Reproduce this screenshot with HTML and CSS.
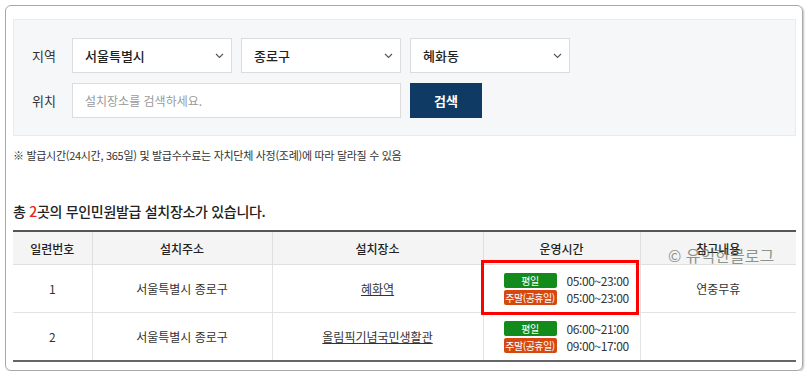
FILE: index.html
```html
<!DOCTYPE html>
<html lang="ko">
<head>
    <meta charset="UTF-8">
    <title>무인민원발급기 설치장소</title>
    <link rel="stylesheet" href="styles.css">
</head>
<body>

<div class="card">
    <div class="search-box">
        <div class="search-row">
            <span class="search-label">지역</span>
            <div class="select">
                <span>서울특별시</span>
                <svg width="9" height="6" viewBox="0 0 9 6"><path d="M1 1l3.5 3.5L8 1" fill="none" stroke="#555" stroke-width="1.1"/></svg>
            </div>
            <div class="select">
                <span>종로구</span>
                <svg width="9" height="6" viewBox="0 0 9 6"><path d="M1 1l3.5 3.5L8 1" fill="none" stroke="#555" stroke-width="1.1"/></svg>
            </div>
            <div class="select">
                <span>혜화동</span>
                <svg width="9" height="6" viewBox="0 0 9 6"><path d="M1 1l3.5 3.5L8 1" fill="none" stroke="#555" stroke-width="1.1"/></svg>
            </div>
        </div>
        <div class="search-row">
            <span class="search-label">위치</span>
            <input type="text" class="search-input" placeholder="설치장소를 검색하세요.">
            <button type="button" class="search-btn">검색</button>
        </div>
    </div>

    <p class="note">※ 발급시간(24시간, 365일) 및 발급수수료는 자치단체 사정(조례)에 따라 달라질 수 있음</p>

    <h2 class="result-title">총 <em>2</em>곳의 무인민원발급 설치장소가 있습니다.</h2>

    <table class="result-table">
        <colgroup>
            <col class="col-no">
            <col class="col-addr">
            <col class="col-place">
            <col class="col-time">
            <col class="col-memo">
        </colgroup>
        <thead>
            <tr>
                <th>일련번호</th>
                <th>설치주소</th>
                <th>설치장소</th>
                <th>운영시간</th>
                <th>참고내용</th>
            </tr>
        </thead>
        <tbody>
            <tr>
                <td>1</td>
                <td>서울특별시 종로구</td>
                <td><a href="#">혜화역</a></td>
                <td>
                    <div class="hours"><span class="badge weekday">평일</span><span>05:00~23:00</span></div>
                    <div class="hours"><span class="badge weekend">주말(공휴일)</span><span>05:00~23:00</span></div>
                </td>
                <td>연중무휴</td>
            </tr>
            <tr>
                <td>2</td>
                <td>서울특별시 종로구</td>
                <td><a href="#">올림픽기념국민생활관</a></td>
                <td>
                    <div class="hours"><span class="badge weekday">평일</span><span>06:00~21:00</span></div>
                    <div class="hours"><span class="badge weekend">주말(공휴일)</span><span>09:00~17:00</span></div>
                </td>
                <td></td>
            </tr>
        </tbody>
    </table>

    <div class="highlight"></div>
    <div class="watermark">© 유익한블로그</div>
</div>

</body>
</html>
```

FILE: styles.css
```css
body {
    margin: 5px 0 0 5px;
    font-family: "Noto Sans CJK KR", "Noto Sans", sans-serif;
    color: #333;
    background: #fff;
}

.card {
    position: relative;
    box-sizing: border-box;
    width: 798px;
    height: 366px;
    padding: 13px 6px 0 7px;
    border: 1px solid #a8a8a8;
    border-radius: 6px;
    box-shadow: 1px 1px 2px rgba(0,0,0,0.25);
}

.search-box {
    box-sizing: border-box;
    height: 117px;
    padding: 18px 18px;
    background: #f6f7f9;
    border: 1px solid #e9eaec;
    display: flex;
    flex-direction: column;
    gap: 10px;
}

.search-row {
    display: flex;
    align-items: center;
    gap: 9px;
    height: 35px;
}

.search-label {
    width: 31px;
    font-size: 13px;
    color: #333;
}

.select {
    box-sizing: border-box;
    width: 160px;
    height: 35px;
    padding: 0 7px 0 12px;
    background: #fff;
    border: 1px solid #dcdcdc;
    display: flex;
    align-items: center;
    justify-content: space-between;
    font-size: 13px;
    font-weight: 500;
    color: #222;
}

.search-input {
    box-sizing: border-box;
    width: 329px;
    height: 35px;
    padding: 0 12px;
    border: 1px solid #dcdcdc;
    font-family: inherit;
    font-size: 12px;
    outline: none;
}

.search-input::placeholder {
    color: #9a9a9a;
}

.search-btn {
    width: 72px;
    height: 35px;
    border: none;
    background: #0f3a63;
    color: #fff;
    font-family: inherit;
    font-size: 13px;
    font-weight: bold;
}

.note {
    margin: 11px 0 0;
    font-size: 11px;
    line-height: 16px;
    color: #333;
    letter-spacing: -0.3px;
}

.result-title {
    margin: 38px 0 9px;
    font-size: 14px;
    font-weight: 500;
    line-height: 20px;
    color: #222;
    letter-spacing: -0.3px;
}

.result-title em {
    font-style: normal;
    color: #e8231b;
}

.result-table {
    width: 783px;
    border-collapse: collapse;
    table-layout: fixed;
    border-top: 2px solid #555;
    border-bottom: 2px solid #666;
    font-size: 12px;
    color: #333;
}

.col-no { width: 79px; }
.col-addr { width: 180px; }
.col-place { width: 211px; }
.col-time { width: 157px; }
.col-memo { width: 156px; }

.result-table th {
    height: 32px;
    padding: 0;
    background: #f4f4f4;
    font-weight: 500;
    color: #222;
    border-bottom: 1px solid #e0e0e0;
    border-left: 1px solid #e0e0e0;
}

.result-table td {
    height: 47px;
    padding: 0;
    text-align: center;
    border-bottom: 1px solid #e3e3e3;
    border-left: 1px solid #e3e3e3;
}

.result-table th:first-child,
.result-table td:first-child {
    border-left: none;
}

.result-table a {
    color: #333;
    text-decoration: underline;
}

.hours {
    display: flex;
    align-items: center;
    gap: 10px;
    padding-left: 20px;
    height: 17px;
    font-size: 12px;
    letter-spacing: -0.4px;
    color: #333;
}

.badge {
    width: 53px;
    height: 15px;
    border-radius: 2px;
    color: #fff;
    font-size: 10px;
    line-height: 15px;
    text-align: center;
    letter-spacing: -0.5px;
}

.weekday {
    background: #138a1c;
}

.weekend {
    background: #d5490f;
}

.highlight {
    position: absolute;
    left: 475px;
    top: 254px;
    width: 152px;
    height: 49px;
    border: 3px solid #f00;
}

.watermark {
    position: absolute;
    left: 662px;
    top: 237px;
    font-size: 16px;
    color: rgba(90, 105, 90, 0.7);
}
```
